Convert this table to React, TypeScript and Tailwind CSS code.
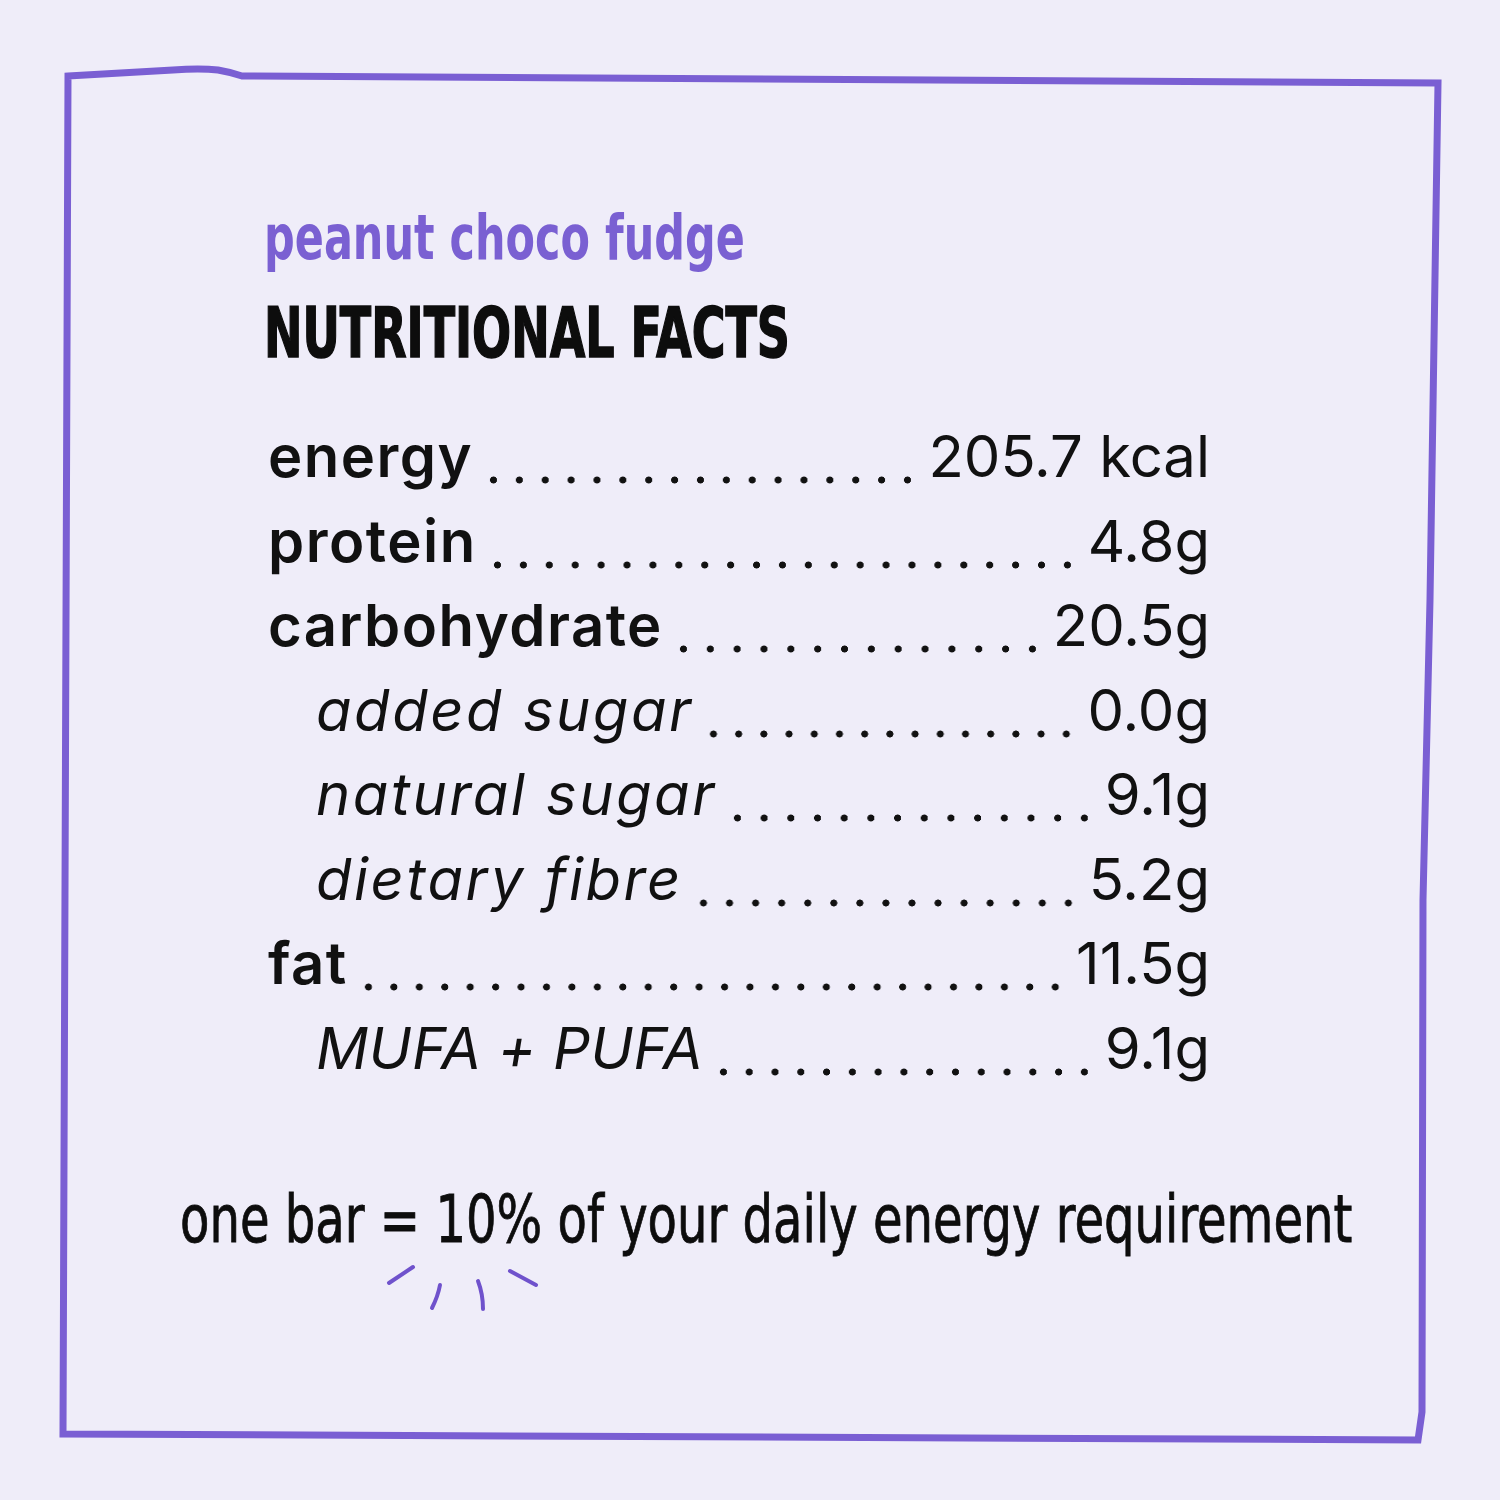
import React from "react";

type Row = { label: string; value: string; sub?: boolean; caps?: boolean };

const ROWS: Row[] = [
  { label: "energy", value: "205.7 kcal" },
  { label: "protein", value: "4.8g" },
  { label: "carbohydrate", value: "20.5g" },
  { label: "added sugar", value: "0.0g", sub: true },
  { label: "natural sugar", value: "9.1g", sub: true },
  { label: "dietary fibre", value: "5.2g", sub: true },
  { label: "fat", value: "11.5g" },
  { label: "MUFA + PUFA", value: "9.1g", sub: true, caps: true },
];

const condensed = "font-['Liberation_Sans_Narrow','DejaVu_Sans_Condensed','Roboto_Condensed',Roboto,sans-serif] [font-stretch:condensed]";

function Frame() {
  return (
    <svg className="absolute inset-0 pointer-events-none" width="1500" height="1500" viewBox="0 0 1500 1500" fill="none">
      <path
        d="M68 76 L173 70 Q200 68 218 70 Q230 72 242 76 L1438 83 L1430 600 L1423 900 L1422 1412 L1418 1440 L63 1434 L68 76 Z"
        stroke="#7a5fd3"
        strokeWidth="7"
        strokeLinejoin="miter"
      />
      <g stroke="#6f52cc" strokeWidth="4" strokeLinecap="round">
        <path d="M389 1283 L413 1267" />
        <path d="M432 1308 Q438 1296 440 1285" />
        <path d="M478 1281 Q483 1294 483 1309" />
        <path d="M510 1271 L536 1285" />
      </g>
    </svg>
  );
}

function NutritionRow({ row }: { row: Row }) {
  let labelCls = "font-semibold tracking-[1.5px]";
  if (row.sub) labelCls = row.caps ? "pl-[48px] italic font-normal tracking-[0.2px]" : "pl-[48px] italic font-normal tracking-[2.5px]";
  return (
    <div className="flex items-baseline h-[84.5px]">
      <span className={labelCls}>{row.label}</span>
      <div className="flex-1 mx-2 h-[8px] relative top-[7px] bg-[radial-gradient(circle,#111_3.2px,transparent_3.8px)] bg-[length:25px_8px] bg-repeat-space" />
      <span className="font-normal">{row.value}</span>
    </div>
  );
}

export default function App() {
  return (
    <div className="relative w-[1500px] h-[1500px] bg-[#efedf9] overflow-hidden text-[#111]">
      <Frame />
      <div className="relative flex flex-col pt-[200px]">
        <div className="pl-[264px] flex flex-col items-start">
          <h2 className={`${condensed} inline-block origin-left scale-x-[0.77] whitespace-nowrap text-[62px] leading-[76px] font-bold text-[#7a60d2]`}>
            peanut choco fudge
          </h2>
          <h1 className={`${condensed} inline-block origin-left scale-x-[0.73] whitespace-nowrap text-[70px] leading-[84px] font-bold text-[#0d0d0d] mt-[15px] [-webkit-text-stroke:1.5px_#0d0d0d]`}>
            NUTRITIONAL FACTS
          </h1>
        </div>
        <div className="pl-[268px] w-[1210px] mt-[39px] font-['Inter',sans-serif] text-[58px] leading-[84px]">
          {ROWS.map((r) => (
            <NutritionRow key={r.label} row={r} />
          ))}
        </div>
        <p className="mt-[90px] pl-[180px]">
          <span className={`${condensed} inline-block origin-left scale-x-[0.81] whitespace-nowrap text-[66px] leading-[80px] font-normal text-[#0d0d0d] [-webkit-text-stroke:0.8px_#0d0d0d]`}>
            one bar = 10% of your daily energy requirement
          </span>
        </p>
      </div>
    </div>
  );
}
